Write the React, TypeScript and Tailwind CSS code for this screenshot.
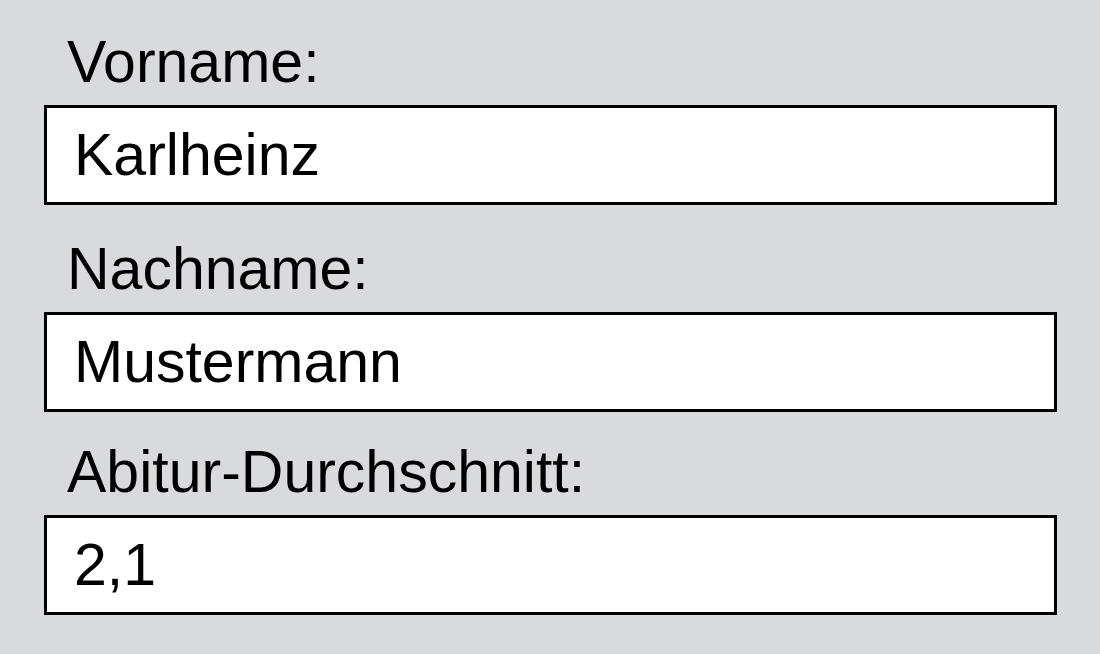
const fields = [
  { label: "Vorname:", value: "Karlheinz", gap: "" },
  { label: "Nachname:", value: "Mustermann", gap: "mt-[30px]" },
  { label: "Abitur-Durchschnitt:", value: "2,1", gap: "mt-[26px]" },
];

export default function App() {
  return (
    <div className="w-[1100px] h-[654px] bg-[#d9dadc] pt-[28px] pl-[44px] font-['Liberation_Sans',Arial,sans-serif] text-black">
      {fields.map((f) => (
        <div key={f.label} className={f.gap}>
          <div className="h-[64px] leading-[68px] text-[59px] pl-[23px]">{f.label}</div>
          <div className="mt-[13px] w-[1013px] h-[100px] border-[3px] border-black bg-white pl-[27px] flex items-center text-[59px] leading-[66px]">
            {f.value}
          </div>
        </div>
      ))}
    </div>
  );
}
